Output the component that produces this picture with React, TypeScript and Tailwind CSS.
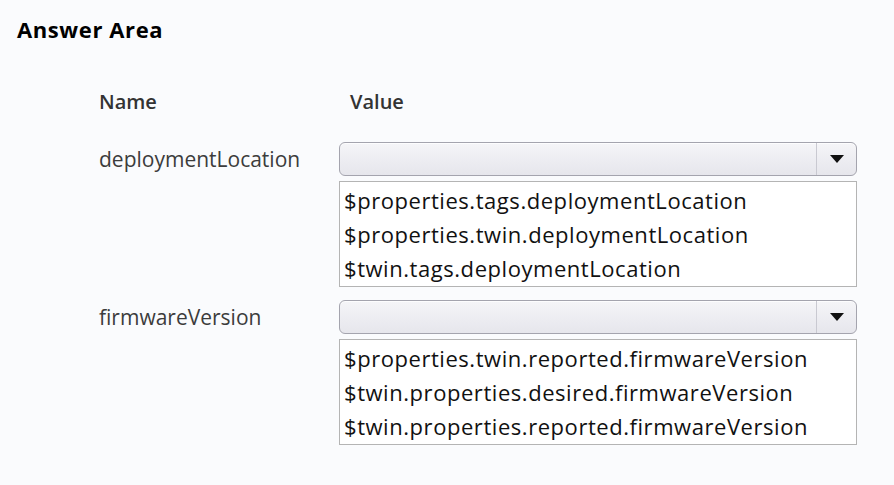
import React from "react";

const rows = [
  {
    name: "deploymentLocation",
    options: [
      "$properties.tags.deploymentLocation",
      "$properties.twin.deploymentLocation",
      "$twin.tags.deploymentLocation",
    ],
  },
  {
    name: "firmwareVersion",
    options: [
      "$properties.twin.reported.firmwareVersion",
      "$twin.properties.desired.firmwareVersion",
      "$twin.properties.reported.firmwareVersion",
    ],
  },
];

function Dropdown() {
  return (
    <div className="flex h-[34px] w-full rounded-[6px] border border-[#a4a4ae] bg-[linear-gradient(180deg,#f5f5f8_0%,#e6e6ec_100%)] shadow-[inset_0_1px_0_rgba(255,255,255,0.8)]">
      <div className="flex-1" />
      <div className="flex w-[40px] items-center justify-center border-l border-[#c9c9d1]">
        <svg width="14" height="8" viewBox="0 0 14 8">
          <path d="M0 0 L14 0 L7 8 Z" fill="#111" />
        </svg>
      </div>
    </div>
  );
}

export default function App() {
  return (
    <div className="h-[485px] w-[894px] overflow-hidden bg-[#fafbfd] pl-[17px] pt-[14px] font-['Open_Sans',sans-serif]">
      <h1 className="text-[22px] leading-[30px] font-bold tracking-[0.6px] text-black">Answer Area</h1>

      <div className="ml-[82px] mt-[44px]">
        <div className="flex text-[20px] leading-[28px] font-semibold text-[#333]">
          <div className="w-[251px]">Name</div>
          <div>Value</div>
        </div>

        <div className="mt-[26px] flex flex-col gap-[13px]">
          {rows.map(r => (
            <div key={r.name} className="flex">
              <div className="w-[240px] text-[21px] leading-[34px] text-[#3c3c3c]">{r.name}</div>
              <div className="w-[518px]">
                <Dropdown />
                <div className="mt-[5px] border border-[#b4b4b4] bg-white pl-[4px] pt-[1px] pb-[1px] text-[22px] leading-[34px] tracking-[0.55px] text-[#111]">
                  {r.options.map(o => (
                    <div key={o}>{o}</div>
                  ))}
                </div>
              </div>
            </div>
          ))}
        </div>
      </div>
    </div>
  );
}
